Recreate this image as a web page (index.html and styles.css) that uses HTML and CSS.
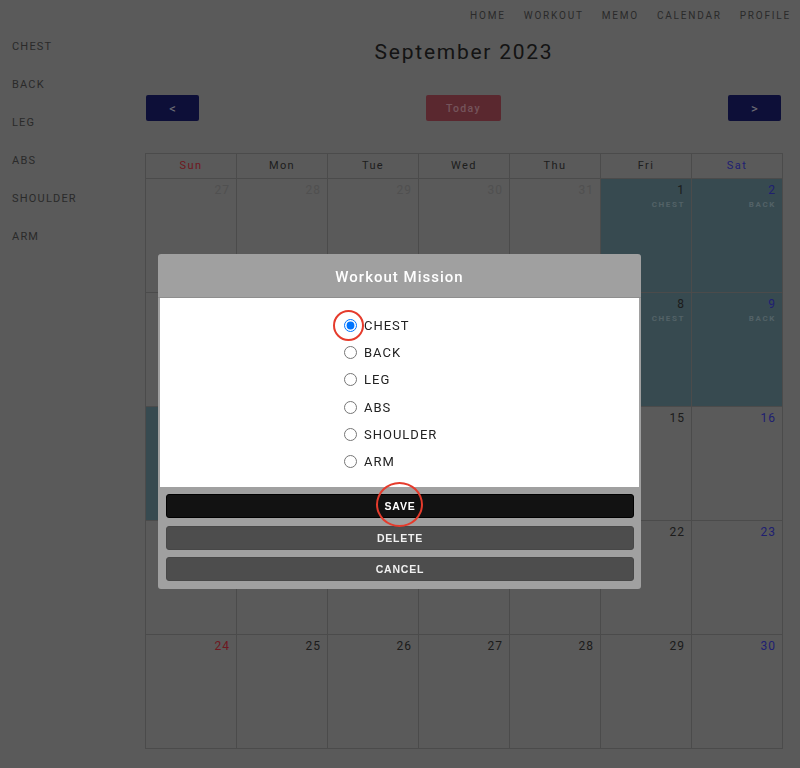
FILE: index.html
```html
<!DOCTYPE html>
<html lang="en">
<head>
<meta charset="utf-8">
<title>Workout Calendar</title>
<link rel="stylesheet" href="styles.css">
</head>
<body>
<header class="topnav">
  <a class="nav-link">HOME</a>
  <a class="nav-link">WORKOUT</a>
  <a class="nav-link">MEMO</a>
  <a class="nav-link">CALENDAR</a>
  <a class="nav-link">PROFILE</a>
</header>
<div class="layout">
  <aside class="sidebar">
    <div class="side-item">CHEST</div>
    <div class="side-item">BACK</div>
    <div class="side-item">LEG</div>
    <div class="side-item">ABS</div>
    <div class="side-item">SHOULDER</div>
    <div class="side-item">ARM</div>
  </aside>
  <main class="main">
    <h1 class="title">September 2023</h1>
    <div class="toolbar">
      <button class="nav-btn">&lt;</button>
      <button class="today-btn">Today</button>
      <button class="nav-btn">&gt;</button>
    </div>
    <div class="cal">
      <div class="dow sun">Sun</div>
      <div class="dow">Mon</div>
      <div class="dow">Tue</div>
      <div class="dow">Wed</div>
      <div class="dow">Thu</div>
      <div class="dow">Fri</div>
      <div class="dow sat">Sat</div>

      <div class="day other"><span class="num">27</span></div>
      <div class="day other"><span class="num">28</span></div>
      <div class="day other"><span class="num">29</span></div>
      <div class="day other"><span class="num">30</span></div>
      <div class="day other"><span class="num">31</span></div>
      <div class="day done"><span class="num">1</span><span class="tag">CHEST</span></div>
      <div class="day done sat"><span class="num">2</span><span class="tag">BACK</span></div>

      <div class="day sun"><span class="num">3</span></div>
      <div class="day"><span class="num">4</span></div>
      <div class="day"><span class="num">5</span></div>
      <div class="day"><span class="num">6</span></div>
      <div class="day"><span class="num">7</span></div>
      <div class="day done"><span class="num">8</span><span class="tag">CHEST</span></div>
      <div class="day done sat"><span class="num">9</span><span class="tag">BACK</span></div>

      <div class="day done sun"><span class="num">10</span><span class="tag">LEG</span></div>
      <div class="day"><span class="num">11</span></div>
      <div class="day"><span class="num">12</span></div>
      <div class="day"><span class="num">13</span></div>
      <div class="day"><span class="num">14</span></div>
      <div class="day"><span class="num">15</span></div>
      <div class="day sat"><span class="num">16</span></div>

      <div class="day sun"><span class="num">17</span></div>
      <div class="day"><span class="num">18</span></div>
      <div class="day"><span class="num">19</span></div>
      <div class="day"><span class="num">20</span></div>
      <div class="day"><span class="num">21</span></div>
      <div class="day"><span class="num">22</span></div>
      <div class="day sat"><span class="num">23</span></div>

      <div class="day sun"><span class="num">24</span></div>
      <div class="day"><span class="num">25</span></div>
      <div class="day"><span class="num">26</span></div>
      <div class="day"><span class="num">27</span></div>
      <div class="day"><span class="num">28</span></div>
      <div class="day"><span class="num">29</span></div>
      <div class="day sat"><span class="num">30</span></div>
    </div>
  </main>
</div>

<div class="overlay"></div>

<div class="modal">
  <div class="modal-head">Workout Mission</div>
  <div class="modal-body">
    <label class="opt"><input type="radio" name="mission" checked><span>CHEST</span></label>
    <label class="opt"><input type="radio" name="mission"><span>BACK</span></label>
    <label class="opt"><input type="radio" name="mission"><span>LEG</span></label>
    <label class="opt"><input type="radio" name="mission"><span>ABS</span></label>
    <label class="opt"><input type="radio" name="mission"><span>SHOULDER</span></label>
    <label class="opt"><input type="radio" name="mission"><span>ARM</span></label>
  </div>
  <div class="modal-foot">
    <button class="mbtn save">SAVE</button>
    <button class="mbtn">DELETE</button>
    <button class="mbtn">CANCEL</button>
  </div>
</div>

<div class="mark mark-radio"></div>
<div class="mark mark-save"></div>
</body>
</html>
```
FILE: styles.css
```css
* { box-sizing: border-box; }

html, body {
  margin: 0;
  padding: 0;
  background: #b4b4b4;
  font-family: Roboto, "Liberation Sans", Arial, sans-serif;
  color: #383838;
}

.topnav {
  height: 31px;
  display: flex;
  justify-content: flex-end;
  align-items: center;
  gap: 18px;
  padding: 1px 9px 0 0;
}

.nav-link {
  font-size: 10px;
  letter-spacing: 1.8px;
  color: #545454;
  line-height: 12px;
}

.layout {
  display: flex;
}

.sidebar {
  width: 145px;
  flex: none;
  padding: 9px 0 0 12px;
  display: flex;
  flex-direction: column;
  gap: 24px;
}

.side-item {
  font-size: 11px;
  line-height: 14px;
  letter-spacing: 1.2px;
  color: #545454;
}

.main {
  width: 638px;
  flex: none;
}

.title {
  margin: 9px 0 0;
  font-size: 21px;
  line-height: 24px;
  font-weight: 400;
  letter-spacing: 1.75px;
  text-align: center;
  color: #282828;
}

.toolbar {
  margin-top: 31px;
  display: flex;
  justify-content: space-between;
  padding: 0 2px 0 1px;
}

.nav-btn, .today-btn {
  height: 26px;
  border: none;
  border-radius: 2px;
  font-family: Roboto, "Liberation Sans", Arial, sans-serif;
  padding: 0;
}

.nav-btn {
  width: 53px;
  background: #1a1e70;
  color: #e0e0ec;
  font-size: 13px;
}

.today-btn {
  width: 75px;
  background: #b4505f;
  color: #e8a8b6;
  font-size: 10.5px;
  font-weight: 500;
  letter-spacing: 1.3px;
}

.cal {
  margin-top: 32px;
  display: grid;
  grid-template-columns: repeat(7, 91px);
  grid-template-rows: 25px repeat(5, 114px);
  border-left: 1px solid #969696;
  border-top: 1px solid #969696;
  width: 638px;
}

.dow, .day {
  border-right: 1px solid #969696;
  border-bottom: 1px solid #969696;
}

.dow {
  display: flex;
  align-items: center;
  justify-content: center;
  font-size: 11px;
  letter-spacing: 1.4px;
  color: #3c3c3c;
  padding-bottom: 1px;
}

.dow.sun { color: #dc3040; }
.dow.sat { color: #4040e0; }

.day {
  display: flex;
  flex-direction: column;
  align-items: flex-end;
  padding: 4px 6px 0 0;
}

.day.done { background: #6e94a0; }

.num {
  font-size: 12px;
  line-height: 14px;
  letter-spacing: 1px;
  color: #383838;
}

.day.other .num { color: #a0a0a0; }
.day.sun .num { color: #dc3040; }
.day.sat .num { color: #4040e0; }

.tag {
  margin-top: 3px;
  font-size: 8px;
  line-height: 10px;
  font-weight: 700;
  letter-spacing: 1.6px;
  color: #a6c4ce;
}

.overlay {
  position: fixed;
  inset: 0;
  background: rgba(0, 0, 0, 0.5);
}

.modal {
  position: fixed;
  top: 254px;
  left: 158px;
  width: 483px;
  background: #a0a0a0;
  border-radius: 3px;
  overflow: hidden;
}

.modal-head {
  height: 44px;
  display: flex;
  align-items: center;
  justify-content: center;
  color: #ffffff;
  font-size: 15px;
  font-weight: 500;
  letter-spacing: 1px;
  padding-top: 2px;
  border-bottom: 1px solid #8e8e8e;
}

.modal-body {
  margin: 0 2px;
  background: #ffffff;
  padding: 14px 0 12px 184px;
  display: flex;
  flex-direction: column;
  align-items: flex-start;
}

.opt {
  height: 27.2px;
  display: flex;
  align-items: center;
  gap: 7px;
  font-size: 13px;
  letter-spacing: 1px;
  color: #222222;
}

.opt input {
  margin: 0;
  width: 13px;
  height: 13px;
}

.modal-foot {
  padding: 7px 7px 8px 8px;
  display: flex;
  flex-direction: column;
  gap: 7.5px;
}

.mbtn {
  height: 24px;
  border: 1px solid #474747;
  border-radius: 3px;
  background: #4d4d4d;
  color: #f0f0f0;
  font-family: "Liberation Sans", Arial, sans-serif;
  font-size: 10.5px;
  font-weight: 700;
  letter-spacing: 0.8px;
  padding: 0;
}

.mbtn.save {
  background: #121212;
  border-color: #000000;
  color: #ffffff;
}

.mark {
  position: fixed;
  border: 2px solid #e53b2c;
  border-radius: 50%;
}

.mark-radio {
  left: 333px;
  top: 310px;
  width: 31px;
  height: 31px;
}

.mark-save {
  left: 376px;
  top: 482px;
  width: 47px;
  height: 45px;
}
```
